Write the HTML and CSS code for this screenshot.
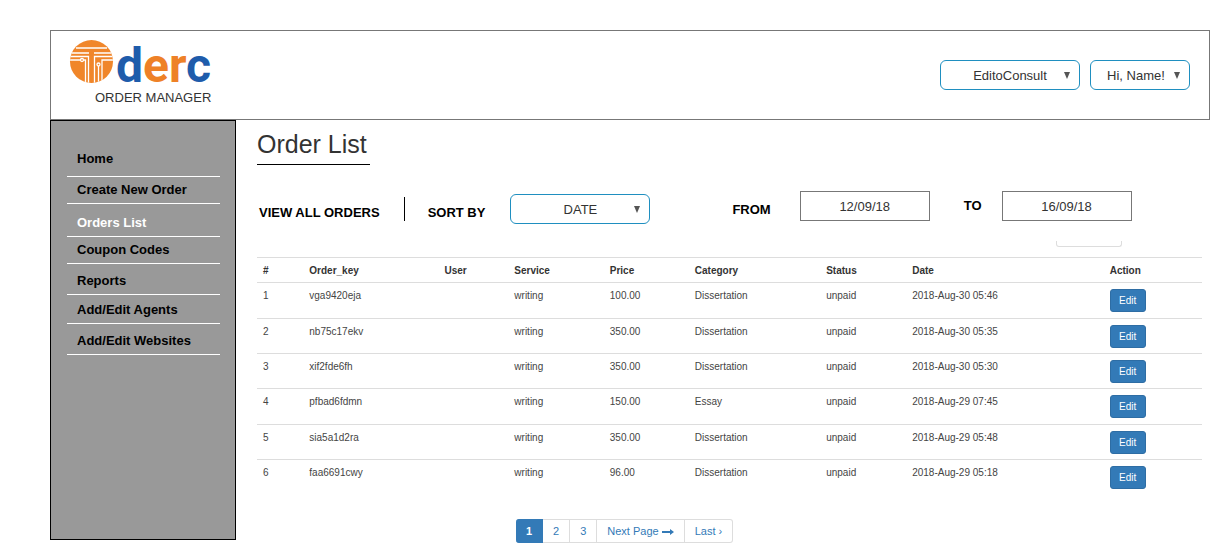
FILE: index.html
```
<!DOCTYPE html>
<html lang="en">
<head>
<meta charset="utf-8">
<title>Order Manager</title>
<link rel="stylesheet" href="styles.css">
</head>
<body>
<div class="page">
  <header class="topbar">
    <div class="brand">
      <svg class="logo" viewBox="0 0 150 46" role="img" aria-label="derc">
        <defs><clipPath id="disc"><circle cx="21.5" cy="21.500" r="21.5"/></clipPath></defs>
        <circle cx="21.5" cy="21.500" r="21.5" fill="#f0862a"/>
        <g clip-path="url(#disc)" fill="none" stroke="#fff" stroke-width="1.3">
          <path d="M6 8H37M0 13H19M24 13H43"/>
          <path d="M0 16.500H18.500V43M0 20H10M13.500 20H15.500V43"/>
          <path d="M43 16.500H24.500V43M28.500 26V43M43 20H32V43" />
          <circle cx="12" cy="20" r="1.500" fill="#f0862a"/>
          <circle cx="28.500" cy="24.500" r="1.500" fill="#f0862a"/>
        </g>
        <text class="wordmark" x="46" y="42"><tspan class="blue">d</tspan><tspan class="orange">er</tspan><tspan class="blue">c</tspan></text>
      </svg>
      <span class="tagline">ORDER MANAGER</span>
    </div>
    <div class="account">
      <span class="picker"><select aria-label="Site"><option>EditoConsult</option></select><svg class="caret" viewBox="0 0 6 7"><path d="M0 0H6L3 7Z"/></svg></span>
      <span class="picker picker-user"><select aria-label="Account"><option>Hi, Name!</option></select><svg class="caret" viewBox="0 0 6 7"><path d="M0 0H6L3 7Z"/></svg></span>
    </div>
  </header>
  <div class="body">
    <nav class="sidebar">
      <ul>
        <li class="first"><a href="#">Home</a></li>
        <li class="tight"><a href="#">Create New Order</a></li>
        <li class="current"><a href="#" aria-current="page">Orders List</a></li>
        <li class="tight"><a href="#">Coupon Codes</a></li>
        <li><a href="#">Reports</a></li>
        <li class="snug"><a href="#">Add/Edit Agents</a></li>
        <li><a href="#">Add/Edit Websites</a></li>
      </ul>
    </nav>
    <main class="content">
      <h1>Order List</h1>
      <div class="filters">
        <div class="sorting">
          <a class="low view-all" href="#">VIEW ALL ORDERS</a>
          <label class="low" for="sort">SORT BY</label>
          <span class="picker"><select id="sort"><option>DATE</option></select><svg class="caret" viewBox="0 0 6 7"><path d="M0 0H6L3 7Z"/></svg></span>
        </div>
        <div class="range">
          <label class="low" for="from">FROM</label>
          <input id="from" type="text" value="12/09/18">
          <label class="to" for="to">TO</label>
          <input id="to" type="text" value="16/09/18">
        </div>
      </div>
      <div class="stub"></div>
      <table>
        <colgroup><col class="c-num"><col class="c-key"><col class="c-user"><col class="c-service"><col class="c-price"><col class="c-category"><col class="c-status"><col class="c-date"><col></colgroup>
        <thead>
          <tr><th>#</th><th>Order_key</th><th>User</th><th>Service</th><th>Price</th><th>Category</th><th>Status</th><th>Date</th><th>Action</th></tr>
        </thead>
        <tbody>
          <tr><td>1</td><td>vga9420eja</td><td></td><td>writing</td><td>100.00</td><td>Dissertation</td><td>unpaid</td><td>2018-Aug-30 05:46</td><td><button type="button">Edit</button></td></tr>
          <tr><td>2</td><td>nb75c17ekv</td><td></td><td>writing</td><td>350.00</td><td>Dissertation</td><td>unpaid</td><td>2018-Aug-30 05:35</td><td><button type="button">Edit</button></td></tr>
          <tr><td>3</td><td>xif2fde6fh</td><td></td><td>writing</td><td>350.00</td><td>Dissertation</td><td>unpaid</td><td>2018-Aug-30 05:30</td><td><button type="button">Edit</button></td></tr>
          <tr><td>4</td><td>pfbad6fdmn</td><td></td><td>writing</td><td>150.00</td><td>Essay</td><td>unpaid</td><td>2018-Aug-29 07:45</td><td><button type="button">Edit</button></td></tr>
          <tr><td>5</td><td>sia5a1d2ra</td><td></td><td>writing</td><td>350.00</td><td>Dissertation</td><td>unpaid</td><td>2018-Aug-29 05:48</td><td><button type="button">Edit</button></td></tr>
          <tr><td>6</td><td>faa6691cwy</td><td></td><td>writing</td><td>96.00</td><td>Dissertation</td><td>unpaid</td><td>2018-Aug-29 05:18</td><td><button type="button">Edit</button></td></tr>
        </tbody>
      </table>
      <nav class="pages" aria-label="Pages">
        <a class="on" href="#">1</a><a href="#">2</a><a href="#">3</a><a href="#">Next Page <svg class="arrow" viewBox="0 0 12 6"><path d="M0 2H8V0L12 3L8 6V4H0Z"/></svg></a><a href="#">Last ›</a>
      </nav>
    </main>
  </div>
</div>
</body>
</html>
```
FILE: styles.css
```
* { box-sizing: border-box; }
body {
  margin: 0;
  background: #fff;
  color: #333;
  font: 13px/16px "Liberation Sans", Arial, sans-serif;
}
a { color: inherit; text-decoration: none; }
.page { padding: 30px 9px 16px 50px; }

.topbar {
  display: flex;
  justify-content: space-between;
  border: 1px solid #777;
  padding: 9px 19px 13px;
}
.brand { display: flex; flex-direction: column; }
.logo { width: 150px; height: 46px; display: block; margin-bottom: 4px; overflow: visible; }
.wordmark { font: 700 48px Roboto, sans-serif; }
.blue { fill: #1e5cab; }
.orange { fill: #ee8127; }
.tagline { padding-left: 25px; }
.account { display: flex; gap: 10px; padding-top: 20px; }

.picker { position: relative; width: 140px; height: 30px; }
.picker-user { width: 100px; }
.picker select {
  appearance: none;
  width: 100%;
  height: 100%;
  border: 1px solid #1f8fc0;
  border-radius: 6px;
  background: #fff;
  color: #333;
  font: inherit;
  padding: 2px 0 0;
  text-align: center;
  text-align-last: center;
}
.picker-user select { padding-right: 8px; }
.caret {
  position: absolute;
  right: 10px;
  top: 12px;
  width: 6px;
  height: 7px;
  fill: #555;
  pointer-events: none;
}

.body { display: flex; align-items: flex-start; }
.sidebar {
  flex: 0 0 186px;
  min-height: 420px;
  border: 1px solid #000;
  background: #999;
  color: #000;
  font-weight: 700;
  padding: 30px 15px 0 16px;
}
.sidebar ul { list-style: none; margin: 0; padding: 0; }
.sidebar li { border-bottom: 1px solid #fff; padding: 9px 0 5px 10px; }
.sidebar .first { padding: 0 0 9px 10px; }
.sidebar .tight { padding-top: 5px; }
.sidebar .snug { padding-top: 7px; }
.sidebar .current { color: #fff; padding-top: 11px; }

.content { flex: 1; min-width: 0; padding: 9px 8px 0 21px; }
h1 {
  width: fit-content;
  margin: 0 0 26px;
  padding: 0 3px 5px 0;
  border-bottom: 1px solid #000;
  font-size: 25px;
  line-height: 30px;
  font-weight: 400;
}
.filters { display: flex; gap: 82px; color: #000; font-weight: 700; }
.sorting { display: flex; align-items: center; padding: 3px 0 0 2px; }
.low { padding-top: 8px; }
.sorting label { padding-right: 25px; }
.sorting .view-all { padding-right: 24px; border-right: 1px solid #000; margin-right: 23px; }
.sorting .picker { font-weight: 400; }
.range { display: flex; align-items: center; height: 30px; }
.range input {
  width: 130px;
  height: 30px;
  margin-left: 29px;
  border: 1px solid #777;
  background: #fff;
  color: #333;
  font: inherit;
  font-weight: 400;
  text-align: center;
}
.range .to { margin-left: 34px; }
.range .to + input { margin-left: 20px; }

.stub {
  width: 66px;
  height: 6px;
  margin: 17px 80px 10px auto;
  border: 1px solid #ddd;
  border-top: 0;
  border-radius: 0 0 3px 3px;
}

table {
  width: 100%;
  table-layout: fixed;
  border-collapse: separate;
  border-spacing: 0;
  font-size: 10px;
  line-height: 14px;
}
th, td { border-top: 1px solid #ddd; padding: 6px 6px 4px; text-align: left; vertical-align: top; }
td { padding: 6px 6px 5px; color: #444; }
tbody tr { height: 35px; }
tbody tr:nth-child(3n+1) { height: 36px; }
.c-num { width: 4.9%; }
.c-key { width: 14.3%; }
.c-user { width: 7.4%; }
.c-service { width: 10.1%; }
.c-price { width: 9%; }
.c-category { width: 13.9%; }
.c-status { width: 9.1%; }
.c-date { width: 20.9%; }
td button {
  display: block;
  width: 36px;
  height: 23px;
  border: 1px solid #2e6da4;
  border-radius: 3px;
  background: #337ab7;
  color: #fff;
  font: inherit;
  padding: 0;
}

.pages {
  display: flex;
  width: fit-content;
  margin: 25px 0 0 27.4%;
  font-size: 11px;
  line-height: 22px;
  color: #337ab7;
}
.pages a { border: 1px solid #ddd; border-left: 0; padding: 0 10px; }
.pages .on { background: #337ab7; border-color: #337ab7; color: #fff; font-weight: 700; border-radius: 3px 0 0 3px; }
.pages a:last-child { border-radius: 0 3px 3px 0; }
.arrow { width: 12px; height: 6px; fill: #337ab7; }
```
